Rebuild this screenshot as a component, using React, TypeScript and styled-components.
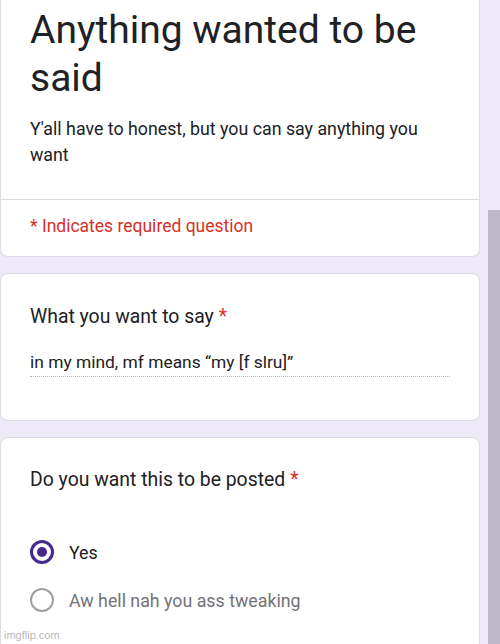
import React from "react";
import styled, { createGlobalStyle } from "styled-components";

const Global = createGlobalStyle`
  html, body { margin: 0; padding: 0; }
  body {
    background: #ede9f6;
    font-family: Roboto, "Noto Sans", Arial, sans-serif;
    color: #202124;
    overflow: hidden;
  }
`;

const Page = styled.div`
  display: flex;
  width: 500px;
  height: 644px;
  overflow: hidden;
  position: relative;
`;

const Column = styled.div`
  width: 480px;
  display: flex;
  flex-direction: column;
  gap: 16px;
  flex-shrink: 0;
`;

const Gutter = styled.div`
  flex: 1;
  display: flex;
  justify-content: flex-end;
`;

const ScrollThumb = styled.div`
  margin-top: 210px;
  width: 12px;
  height: 434px;
  background: #bdb9c6;
`;

const Card = styled.div<{ $top?: boolean }>`
  background: #ffffff;
  border: 1px solid #dcdae2;
  border-top: ${(p) => (p.$top ? "none" : "1px solid #dcdae2")};
  border-radius: ${(p) => (p.$top ? "0 0 8px 8px" : "8px")};
  box-sizing: border-box;
`;

const Section = styled.div<{ $pt: number; $pb: number }>`
  padding: ${(p) => p.$pt}px 24px ${(p) => p.$pb}px 29px;
`;

const Divider = styled.div`
  height: 1px;
  background: #dadce0;
`;

const Title = styled.h1`
  margin: 0;
  font-size: 39px;
  line-height: 48px;
  font-weight: 400;
  color: #202124;
`;

const Description = styled.p`
  margin: 14px 0 0;
  font-size: 17.8px;
  line-height: 26px;
  color: #202124;
`;

const Required = styled.div`
  font-size: 17.5px;
  line-height: 26px;
  color: #d93025;
`;

const Question = styled.div`
  font-size: 19.4px;
  line-height: 26px;
  color: #202124;
`;

const Star = styled.span`
  color: #d93025;
  margin-left: 5px;
`;

const Answer = styled.div`
  margin-top: 20px;
  margin-right: 5px;
  font-size: 17.4px;
  line-height: 24px;
  color: #202124;
  padding-bottom: 2px;
  border-bottom: 1px dotted #b9b9bd;
`;

const Options = styled.div`
  margin-top: 47px;
  display: flex;
  flex-direction: column;
  gap: 24px;
`;

const Option = styled.div`
  display: flex;
  align-items: center;
  gap: 15px;
  height: 24px;
`;

const Radio = styled.div<{ $checked?: boolean }>`
  width: 24px;
  height: 24px;
  box-sizing: border-box;
  border-radius: 50%;
  border: ${(p) => (p.$checked ? "3px solid #47298c" : "2px solid #9e9ea3")};
  display: flex;
  align-items: center;
  justify-content: center;
  flex-shrink: 0;
`;

const Dot = styled.div`
  width: 10px;
  height: 10px;
  border-radius: 50%;
  background: #47298c;
`;

const OptionLabel = styled.span<{ $muted?: boolean }>`
  font-size: 17.8px;
  color: ${(p) => (p.$muted ? "#727277" : "#202124")};
`;

const Watermark = styled.div`
  position: absolute;
  left: 4px;
  bottom: 3px;
  font-family: Arial, "Liberation Sans", sans-serif;
  font-size: 11px;
  color: #b8b8bc;
`;

export default function App() {
  return (
    <>
      <Global />
      <Page>
        <Column>
          <Card $top>
            <Section $pt={6} $pb={31}>
              <Title>Anything wanted to be said</Title>
              <Description>
                Y'all have to honest, but you can say anything you want
              </Description>
            </Section>
            <Divider />
            <Section $pt={13} $pb={17}>
              <Required>* Indicates required question</Required>
            </Section>
          </Card>
          <Card>
            <Section $pt={30} $pb={43}>
              <Question>
                What you want to say<Star>*</Star>
              </Question>
              <Answer>in my mind, mf means “my [f slru]”</Answer>
            </Section>
          </Card>
          <Card>
            <Section $pt={29} $pb={40}>
              <Question>
                Do you want this to be posted<Star>*</Star>
              </Question>
              <Options>
                <Option>
                  <Radio $checked>
                    <Dot />
                  </Radio>
                  <OptionLabel>Yes</OptionLabel>
                </Option>
                <Option>
                  <Radio />
                  <OptionLabel $muted>Aw hell nah you ass tweaking</OptionLabel>
                </Option>
              </Options>
            </Section>
          </Card>
        </Column>
        <Gutter>
          <ScrollThumb />
        </Gutter>
        <Watermark>imgflip.com</Watermark>
      </Page>
    </>
  );
}
